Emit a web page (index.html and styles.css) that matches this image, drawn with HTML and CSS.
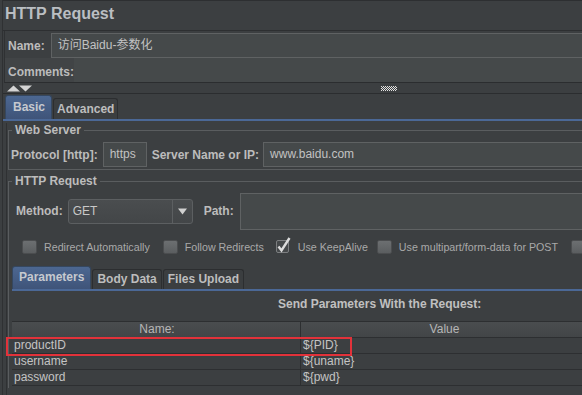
FILE: index.html
```html
<!DOCTYPE html>
<html lang="zh-CN">
<head>
<meta charset="utf-8" />
<title>HTTP Request</title>
<link rel="stylesheet" href="styles.css">
</head>
<body>
<div class="frame">
	<div class="title">HTTP Request</div>
	<div class="name-row">
		<span class="label">Name:</span>
		<div class="field grow name-field">访问Baidu-参数化</div>
	</div>
	<div class="comments-row">
		<span class="label">Comments:</span>
		<div class="comments-area"></div>
	</div>
	<div class="splitter">
		<svg class="arrows" width="26" height="7" viewBox="0 0 26 7">
			<path d="M0 6.5 L6.5 0.5 L13 6.5 Z" fill="#d4d4d4" />
			<path d="M12 0.5 L25 0.5 L18.5 6.5 Z" fill="#d4d4d4" />
		</svg>
		<svg class="grip" width="16" height="5" viewBox="0 0 16 5">
			<defs>
				<pattern id="dots" width="2" height="2" patternUnits="userSpaceOnUse">
					<rect x="0" y="0" width="1" height="1" fill="#e0e0e0" />
					<rect x="1" y="1" width="1" height="1" fill="#e0e0e0" />
				</pattern>
			</defs>
			<rect x="0" y="0" width="16" height="5" fill="url(#dots)" />
		</svg>
	</div>
	<div class="tabs">
		<span class="tab selected">Basic</span>
		<span class="tab">Advanced</span>
	</div>
	<div class="tab-body">
		<fieldset class="group web-server">
			<legend>Web Server</legend>
			<div class="row server-row">
				<span class="label">Protocol [http]:</span>
				<div class="field protocol">https</div>
				<span class="label">Server Name or IP:</span>
				<div class="field grow">www.baidu.com</div>
			</div>
		</fieldset>
		<fieldset class="group http-request">
			<legend>HTTP Request</legend>
			<div class="row method-row">
				<span class="label">Method:</span>
				<div class="combo">
					<span class="combo-value">GET</span>
					<span class="combo-arrow">
						<svg width="9" height="7" viewBox="0 0 9 7"><path d="M0 0.5 L9 0.5 L4.5 6.5 Z" fill="#d0d0d0" /></svg>
					</span>
				</div>
				<span class="label path-label">Path:</span>
				<div class="field grow path"></div>
			</div>
			<div class="row checks">
				<span class="check"><span class="box"></span>Redirect Automatically</span>
				<span class="check"><span class="box"></span>Follow Redirects</span>
				<span class="check">
					<svg class="tick" width="15" height="17" viewBox="0 0 15 17">
						<rect x="0.5" y="3.5" width="12" height="12" rx="1.5" fill="#45484a" stroke="#7d7f81" />
						<path d="M2.5 9.5 L5.5 13.5 L13.5 1" fill="none" stroke="#dcdcdc" stroke-width="2.4" />
					</svg>Use KeepAlive</span>
				<span class="check multipart"><span class="box"></span>Use multipart/form-data for POST</span>
				<span class="check"><span class="box"></span></span>
			</div>
			<div class="subtabs">
				<span class="tab selected">Parameters</span>
				<span class="tab">Body Data</span>
				<span class="tab">Files Upload</span>
			</div>
			<div class="caption">Send Parameters With the Request:</div>
			<div class="params">
				<div class="cell head">Name:</div>
				<div class="cell head">Value</div>
				<div class="cell">productID</div>
				<div class="cell value">${PID}</div>
				<div class="cell">username</div>
				<div class="cell value">${uname}</div>
				<div class="cell">password</div>
				<div class="cell value">${pwd}</div>
				<div class="highlight"></div>
			</div>
		</fieldset>
	</div>
</div>
</body>
</html>
```

FILE: styles.css
```css
html,
body {
	margin: 0;
	padding: 0;
}

body {
	background-color: #3c3f41;
	font-family: "Liberation Sans", Arial, "Noto Sans CJK SC", sans-serif;
	font-size: 12px;
	color: #bbbbbb;
	overflow: hidden;
}

.frame {
	width: 600px;
	height: 395px;
	margin-left: 2px;
	border-left: 1px solid #2f3133;
}

.title {
	box-sizing: border-box;
	height: 31px;
	padding-left: 2px;
	line-height: 26px;
	font-size: 16px;
	font-weight: bold;
	color: #babec2;
	border-top: 1px solid #2d2f31;
	border-bottom: 1px solid #2d2f31;
}

.label {
	font-weight: bold;
	white-space: nowrap;
	color: #bcbcbc;
}

.name-row {
	display: flex;
	align-items: center;
	box-sizing: border-box;
	height: 27px;
	padding-top: 2px;
	margin-left: 1px;
	border-left: 1px solid #2f3133;
}

.name-row .label {
	margin: 0 6px 0 3px;
}

.field {
	box-sizing: border-box;
	height: 25px;
	line-height: 23px;
	padding-left: 6px;
	background-color: #45494a;
	border: 1px solid #5f6263;
	color: #c2c2c2;
	white-space: nowrap;
}

.grow {
	flex: 1;
}

.comments-row {
	display: flex;
	box-sizing: border-box;
	height: 25px;
	margin-left: 1px;
	border-left: 1px solid #2f3133;
	border-bottom: 1px solid #2b2d2f;
	background-color: #414446;
}

.comments-row .label {
	width: 66px;
	padding: 7px 0 0 3px;
}

.comments-area {
	flex: 1;
	background-color: #45494a;
}

.splitter {
	display: flex;
	align-items: center;
	box-sizing: border-box;
	height: 11px;
	border-bottom: 1px solid #2b2d2f;
}

.arrows {
	margin-left: 4px;
}

.grip {
	margin-left: 348px;
}

.tabs,
.subtabs {
	display: flex;
	align-items: flex-end;
	border-bottom: 2px solid #4b6896;
}

.tabs {
	height: 25px;
	padding-left: 2px;
}

.tab {
	box-sizing: border-box;
	height: 21px;
	line-height: 20px;
	padding: 0 3px;
	margin-right: 1px;
	font-weight: bold;
	color: #bdbdbd;
	background-color: #3b3e40;
	border: 1px solid #2c2e30;
	border-bottom: none;
	border-radius: 3px 3px 0 0;
}

.tab.selected {
	height: 24px;
	line-height: 22px;
	padding: 0 6px 0 7px;
	color: #c6c9cf;
	background: linear-gradient(#4c6791, #3f5479);
	border-color: #35475f;
}

.tab-body {
	margin-left: 3px;
	height: 275px;
	border-left: 1px solid #2f3133;
}

.group {
	margin: 2px 0 0 1px;
	padding: 0 0 2px 2px;
	min-width: 0;
	border: 1px solid #5a5d5f;
	border-right: none;
}

.group legend {
	margin-left: 1px;
	padding: 0 3px;
	line-height: 14px;
	font-weight: bold;
	color: #bcbcbc;
}

.row {
	display: flex;
	align-items: center;
}

.server-row {
	padding-top: 5px;
}

.server-row .protocol {
	width: 44px;
	margin: 0 5px 0 5px;
}

.server-row .label + .grow {
	margin-left: 4px;
}

.http-request {
	margin-top: 4px;
	border-bottom: none;
}

.method-row {
	height: 36px;
	padding: 5px 0 0 5px;
}

.method-row .path {
	height: 37px;
	margin-left: 6px;
}

.combo {
	display: flex;
	box-sizing: border-box;
	width: 125px;
	height: 25px;
	margin-left: 5px;
	background: linear-gradient(#4a4d4f, #434648);
	border: 1px solid #5c5f61;
	border-radius: 3px;
}

.combo-value {
	flex: 1;
	padding: 4px 0 0 4px;
	color: #c8c8c8;
}

.combo-arrow {
	display: flex;
	align-items: center;
	justify-content: center;
	width: 19px;
	border-left: 1px solid #5c5f61;
}

.path-label {
	margin-left: 11px;
}

.checks {
	height: 22px;
	margin-top: 7px;
	padding-left: 11px;
	font-size: 10.7px;
	color: #a9a9a9;
}

.check {
	display: flex;
	align-items: center;
	margin-right: 13px;
	white-space: nowrap;
}

.check.multipart {
	margin-left: -4px;
}

.box {
	width: 13px;
	height: 12px;
	margin-right: 7px;
	border: 1px solid #4b4d4f;
	border-radius: 2px;
	background: linear-gradient(#6c6f71, #5b5e60);
}

.tick {
	margin: -4px 7px 0 -1px;
}

.subtabs {
	height: 22px;
	margin: 9px 0 0 1px;
}

.subtabs .tab {
	height: 20px;
	line-height: 19px;
	padding: 0 4px;
}

.subtabs .tab.selected {
	height: 23px;
	line-height: 21px;
	padding: 0 6px;
}

.caption {
	height: 30px;
	line-height: 27px;
	padding-left: 267px;
	font-weight: bold;
	color: #c0c0c0;
}

.params {
	position: relative;
	display: grid;
	grid-template-columns: 288px 286px;
	grid-template-rows: 17px;
	grid-auto-rows: 16px;
	margin-left: 1px;
}

.cell {
	box-sizing: border-box;
	padding-left: 2px;
	line-height: 15px;
	border-bottom: 1px solid #2d2f31;
	color: #c4c4c4;
	white-space: nowrap;
}

.cell.value {
	border-left: 1px solid #2d2f31;
}

.cell.head {
	line-height: 15px;
	text-align: center;
	font-weight: normal;
	color: #b6b6b6;
	background: linear-gradient(#4a4d4f, #424547);
	border-top: 1px solid #2d2f31;
}

.cell.head + .cell.head {
	border-left: 1px solid #2d2f31;
}

.highlight {
	position: absolute;
	left: -6px;
	top: 16px;
	width: 346px;
	height: 19px;
	border: 2px solid #e2323a;
	box-sizing: border-box;
}
```
